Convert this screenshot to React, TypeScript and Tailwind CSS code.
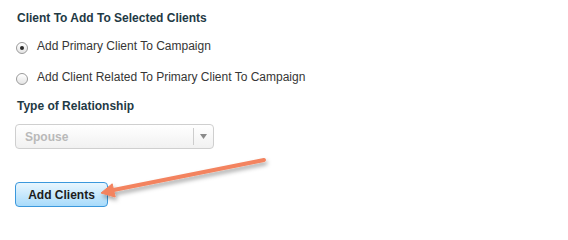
import React from 'react';

function Radio({ checked }: { checked?: boolean }) {
  return (
    <span
      className="mt-[4px] flex h-[12px] w-[12px] shrink-0 items-center justify-center rounded-full border border-[#9a9a9a] bg-[linear-gradient(#ffffff,#e4e4e4)] shadow-[inset_0_1px_1px_rgba(255,255,255,0.9)]"
    >
      {checked && <span className="h-[4px] w-[4px] rounded-full bg-[#2a2a2a]" />}
    </span>
  );
}

export default function App() {
  return (
    <div className="relative h-[232px] w-[568px] overflow-hidden bg-white font-['Liberation_Sans',Arial,sans-serif]">
      <div className="flex flex-col pl-[15px] pt-[10px]">
        {/* Clients section */}
        <h3 className="pl-[2px] text-[12px] font-bold leading-[16px] text-[#1f3a45]">
          Client To Add To Selected Clients
        </h3>

        <label className="mt-[12px] flex items-start gap-[9px] pl-[1px] text-[12px] leading-[16px] text-[#363636]">
          <Radio checked />
          <span>Add Primary Client To Campaign</span>
        </label>

        <label className="mt-[15px] flex items-start gap-[9px] pl-[1px] text-[12px] leading-[16px] text-[#363636]">
          <Radio />
          <span>Add Client Related To Primary Client To Campaign</span>
        </label>

        {/* Relationship */}
        <h3 className="mt-[13px] pl-[2px] text-[12px] font-bold leading-[16px] text-[#1f3a45]">
          Type of Relationship
        </h3>

        <div className="mt-[10px] flex h-[25px] w-[199px] items-center rounded-[4px] border border-[#cfcfcf] bg-[linear-gradient(#ffffff,#f1f1f1)]">
          <span className="flex-1 pl-[9px] text-[12px] font-bold leading-[16px] text-[#b9b9b9]">Spouse</span>
          <span className="h-[17px] w-px bg-[#cdcdcd]" />
          <span className="flex w-[19px] justify-center">
            <svg width="7" height="5" viewBox="0 0 7 5">
              <path d="M0 0h7L3.5 5z" fill="#8a8a8a" />
            </svg>
          </span>
        </div>

        <div className="mt-[33px]">
          <button className="flex h-[25px] w-[93px] items-center justify-center rounded-[4px] border border-[#3b98dc] bg-[linear-gradient(#e9f6fe,#a8dbfb)] text-[12px] font-bold leading-[16px] text-[#1c1c1c]">
            Add Clients
          </button>
        </div>
      </div>

      {/* Annotation arrow */}
      <svg className="pointer-events-none absolute inset-0" width="568" height="232" viewBox="0 0 568 232">
        <defs>
          <filter id="shadow" x="-10%" y="-30%" width="130%" height="190%">
            <feDropShadow dx="1.5" dy="3" stdDeviation="2" floodColor="#000" floodOpacity="0.35" />
          </filter>
        </defs>
        <g filter="url(#shadow)" fill="#f3835f" stroke="#f3835f">
          <line x1="111" y1="190.5" x2="264" y2="160" strokeWidth="4" strokeLinecap="round" />
          <polygon points="101,193 112.2,183.8 115.2,197" strokeWidth="1" strokeLinejoin="round" />
        </g>
      </svg>
    </div>
  );
}
